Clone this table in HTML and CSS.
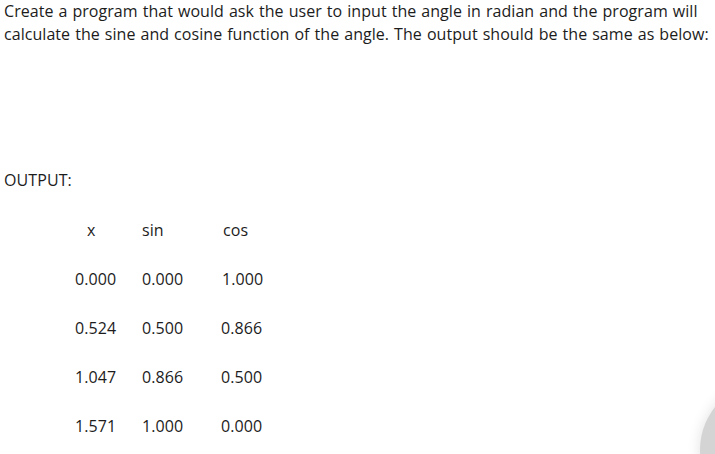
FILE: index.html
```html
<!DOCTYPE html>
<html>
<head>
<meta charset="utf-8">
<link rel="stylesheet" href="styles.css">
</head>
<body>
<p class="intro">Create a program that would ask the user to input the angle in radian and the program will calculate the sine and cosine function of the angle. The output should be the same as below:</p>
<p class="label">OUTPUT:</p>
<div class="table">
  <div class="cell h1">x</div><div class="cell h2">sin</div><div class="cell h3">cos</div>
  <div class="cell">0.000</div><div class="cell">0.000</div><div class="cell c3">1.000</div>
  <div class="cell">0.524</div><div class="cell">0.500</div><div class="cell">0.866</div>
  <div class="cell">1.047</div><div class="cell">0.866</div><div class="cell">0.500</div>
  <div class="cell">1.571</div><div class="cell">1.000</div><div class="cell">0.000</div>
</div>
<div class="fab"></div>
</body>
</html>
```
FILE: styles.css
```css
html, body {
  margin: 0;
  padding: 0;
  background: #ffffff;
  overflow: hidden;
}
body {
  font-family: "Open Sans", "Liberation Sans", sans-serif;
  font-size: 16px;
  line-height: 23px;
  letter-spacing: 0.1px;
  color: #1c1c1c;
  padding: 0 0 0 4px;
  width: 715px;
  height: 454px;
  box-sizing: border-box;
  position: relative;
}
.intro {
  margin: 0 -4px 0 0;
  word-spacing: 0.8px;
  letter-spacing: 0.05px;
}
.label {
  margin: 123px 0 0 0;
}
.table {
  margin: 27px 0 0 71px;
  display: grid;
  grid-template-columns: 67px 79px auto;
  row-gap: 26px;
}
.cell {
  white-space: nowrap;
}
.h1 { padding-left: 12px; }
.h3 { padding-left: 2px; }
.c3 { padding-left: 1px; }
.fab {
  position: absolute;
  left: 700px;
  top: 381px;
  width: 138px;
  height: 138px;
  border-radius: 50%;
  background: #d4d4d4;
  box-shadow: 0 0 14px rgba(0, 0, 0, 0.12);
}
```
